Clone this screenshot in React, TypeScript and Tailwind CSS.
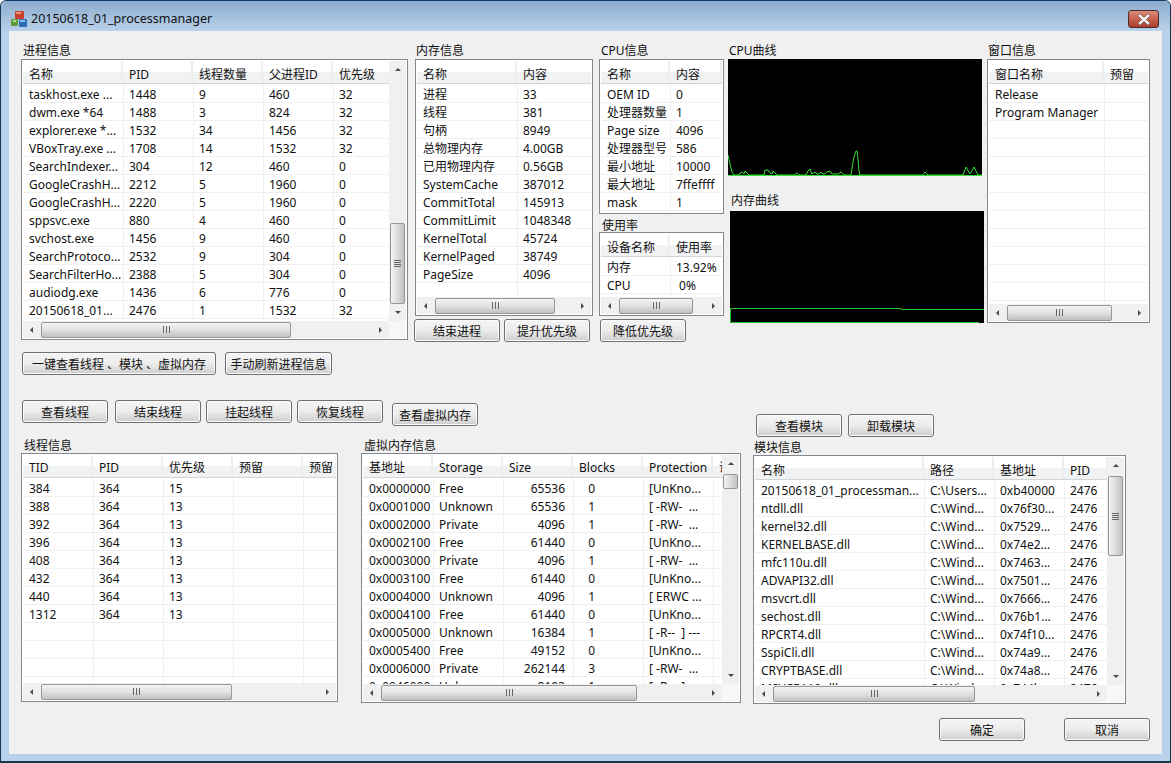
import React from 'react';

type Col = { w: number; right?: boolean };

type ListProps = {
  className: string;
  cols: Col[];
  head: string[];
  rows: string[][];
  hthumb?: number;
  vthumb?: [number, number];
  grip?: boolean;
  headPad?: string;
};

const cols = (...w: number[]): Col[] => w.map((n) => ({ w: n }));

function Arrow({ dir }: { dir: 'up' | 'down' | 'left' | 'right' }) {
  const pts = {
    up: '4,2 7,5 1,5',
    down: '1,2 7,2 4,5',
    left: '5,1 5,7 2,4',
    right: '2,1 2,7 5,4',
  }[dir];
  return (
    <svg width="8" height="8" viewBox="0 0 8 8" className="block">
      <polygon points={pts} fill="#4a4a4a" />
    </svg>
  );
}

function Grip({ vertical }: { vertical?: boolean }) {
  if (vertical) {
    return (
      <div className="flex flex-col gap-px">
        {[0, 1, 2, 3].map((i) => (
          <div key={i} className="h-px w-[7px] bg-[#666]" />
        ))}
      </div>
    );
  }
  return (
    <div className="flex gap-[2px]">
      {[0, 1, 2].map((i) => (
        <div key={i} className="w-px h-[7px] bg-[#666]" />
      ))}
    </div>
  );
}

function HScroll({ thumb }: { thumb: number }) {
  return (
    <div className="h-[17px] flex-1 min-w-0 flex items-center bg-[#f0f0f0]">
      <div className="w-[18px] shrink-0 flex justify-center"><Arrow dir="left" /></div>
      <div
        className="h-[16px] shrink-0 flex items-center justify-center rounded-[2px] border border-[#979797] bg-linear-to-b from-[#f3f3f3] via-[#e2e2e2] to-[#c0c0c0]"
        style={{ width: thumb }}
      >
        <Grip />
      </div>
      <div className="flex-1" />
      <div className="w-[17px] shrink-0 flex justify-center"><Arrow dir="right" /></div>
    </div>
  );
}

function VScroll({ top, height, grip }: { top: number; height: number; grip?: boolean }) {
  return (
    <div className="w-[17px] shrink-0 flex flex-col items-center bg-[#f0f0f0]">
      <div className="h-[17px] shrink-0 flex items-center"><Arrow dir="up" /></div>
      <div className="shrink-0" style={{ height: top - 17 }} />
      <div
        className="w-[15px] shrink-0 flex items-center justify-center rounded-[2px] border border-[#979797] bg-linear-to-r from-[#f3f3f3] via-[#dcdcdc] to-[#c0c0c0]"
        style={{ height }}
      >
        {grip && <Grip vertical />}
      </div>
      <div className="flex-1" />
      <div className="h-[17px] shrink-0 flex items-center"><Arrow dir="down" /></div>
    </div>
  );
}

function ListView({ className, cols, head, rows, hthumb, vthumb, grip, headPad = 'pt-[5px]' }: ListProps) {
  const filled = [...rows];
  while (filled.length < 16) filled.push([]);
  return (
    <div className={`${className} flex flex-col border border-[#828790] bg-white p-px overflow-hidden`}>
      <div className="flex flex-1 min-h-0">
        <div className="flex flex-col flex-1 min-w-0 overflow-hidden">
          <div className="flex h-[23px] shrink-0 mb-px border-b border-[#d5d5d5] bg-linear-to-b from-white from-50% to-[#f1f2f4] to-50%">
            {cols.map((c, i) => (
              <div
                key={i}
                className={`shrink-0 h-full pl-[6px] ${headPad} leading-[17px] border-r-2 border-[#eceef0] whitespace-nowrap overflow-hidden`}
                style={{ width: c.w }}
              >
                {head[i]}
              </div>
            ))}
          </div>
          <div className="flex-1 min-h-0 overflow-hidden">
            {filled.map((row, r) => (
              <div key={r} className="flex h-[18px] pl-px border-b border-[#f0f0f0]">
                {cols.map((c, i) => (
                  <div
                    key={i}
                    className={`shrink-0 h-full pl-[5px] leading-[19px] border-r border-[#f0f0f0] whitespace-pre overflow-hidden ${c.right ? 'text-right pr-[8px]' : ''}`}
                    style={{ width: c.w }}
                  >
                    {row[i] ?? ''}
                  </div>
                ))}
              </div>
            ))}
          </div>
        </div>
        {vthumb && <VScroll top={vthumb[0]} height={vthumb[1]} grip={grip} />}
      </div>
      {hthumb && (
        <div className="flex shrink-0">
          <HScroll thumb={hthumb} />
          {vthumb && <div className="w-[17px] shrink-0 bg-[#f7f7f7]" />}
        </div>
      )}
    </div>
  );
}

function Btn({ children, className = 'w-[86px]' }: { children: React.ReactNode; className?: string }) {
  return (
    <button className={`${className} h-[23px] shrink-0 pt-[2px] rounded-[3px] border border-[#707070] bg-linear-to-b from-[#f3f3f3] from-10% via-[#ececec] via-50% to-[#cdcdcd] text-center leading-[19px] whitespace-nowrap shadow-[inset_0_0_0_1px_#fbfbfb]`}>
      {children}
    </button>
  );
}

function Label({ children, className = 'leading-[16px]' }: { children: React.ReactNode; className?: string }) {
  return <div className={`h-4 whitespace-nowrap ${className}`}>{children}</div>;
}

const processRows = [
  ['taskhost.exe ...', '1448', '9', '460', '32'],
  ['dwm.exe *64', '1488', '3', '824', '32'],
  ['explorer.exe *...', '1532', '34', '1456', '32'],
  ['VBoxTray.exe ...', '1708', '14', '1532', '32'],
  ['SearchIndexer...', '304', '12', '460', '0'],
  ['GoogleCrashH...', '2212', '5', '1960', '0'],
  ['GoogleCrashH...', '2220', '5', '1960', '0'],
  ['sppsvc.exe', '880', '4', '460', '0'],
  ['svchost.exe', '1456', '9', '460', '0'],
  ['SearchProtoco...', '2532', '9', '304', '0'],
  ['SearchFilterHo...', '2388', '5', '304', '0'],
  ['audiodg.exe', '1436', '6', '776', '0'],
  ['20150618_01...', '2476', '1', '1532', '32'],
];

const memoryRows = [
  ['进程', '33'],
  ['线程', '381'],
  ['句柄', '8949'],
  ['总物理内存', '4.00GB'],
  ['已用物理内存', '0.56GB'],
  ['SystemCache', '387012'],
  ['CommitTotal', '145913'],
  ['CommitLimit', '1048348'],
  ['KernelTotal', '45724'],
  ['KernelPaged', '38749'],
  ['PageSize', '4096'],
];

const cpuRows = [
  ['OEM ID', '0'],
  ['处理器数量', '1'],
  ['Page size', '4096'],
  ['处理器型号', '586'],
  ['最小地址', '10000'],
  ['最大地址', '7ffeffff'],
  ['mask', '1'],
];

const threadRows = [
  ['384', '364', '15'],
  ['388', '364', '13'],
  ['392', '364', '13'],
  ['396', '364', '13'],
  ['408', '364', '13'],
  ['432', '364', '13'],
  ['440', '364', '13'],
  ['1312', '364', '13'],
];

const unknown = '[UnKno...';
const rw = '[ -RW-  ...';
const vmRows = [
  ['0x0000000', 'Free', '65536', '   0', unknown],
  ['0x0001000', 'Unknown', '65536', '   1', rw],
  ['0x0002000', 'Private', '4096', '   1', rw],
  ['0x0002100', 'Free', '61440', '   0', unknown],
  ['0x0003000', 'Private', '4096', '   1', rw],
  ['0x0003100', 'Free', '61440', '   0', unknown],
  ['0x0004000', 'Unknown', '4096', '   1', '[ ERWC ...'],
  ['0x0004100', 'Free', '61440', '   0', unknown],
  ['0x0005000', 'Unknown', '16384', '   1', '[ -R--  ] ---'],
  ['0x0005400', 'Free', '49152', '   0', unknown],
  ['0x0006000', 'Private', '262144', '   3', rw],
  ['0x0046000', 'Unknown', '8192', '   1', '[ -R--  ] ---'],
];

const wind = 'C:\\Wind...';
const moduleRows = [
  ['20150618_01_processman...', 'C:\\Users...', '0xb40000', '2476'],
  ['ntdll.dll', wind, '0x76f30...', '2476'],
  ['kernel32.dll', wind, '0x7529...', '2476'],
  ['KERNELBASE.dll', wind, '0x74e2...', '2476'],
  ['mfc110u.dll', wind, '0x7463...', '2476'],
  ['ADVAPI32.dll', wind, '0x7501...', '2476'],
  ['msvcrt.dll', wind, '0x7666...', '2476'],
  ['sechost.dll', wind, '0x76b1...', '2476'],
  ['RPCRT4.dll', wind, '0x74f10...', '2476'],
  ['SspiCli.dll', wind, '0x74a9...', '2476'],
  ['CRYPTBASE.dll', wind, '0x74a8...', '2476'],
  ['MSVCR110.dll', wind, '0x744b...', '2476'],
];

const cpuLine =
  '0,96 2,105 4,113 6,116 11,116 12,114 14,113 16,115 17,112 19,114 21,116 33,116 36,116 37,111 40,111 42,114 44,115 45,112 47,114 49,116 66,116 69,114 71,116 78,116 80,112 82,110 84,115 87,113 89,115 91,115 93,113 95,115 97,115 99,113 102,112 104,115 110,115 113,113 115,115 117,116 123,116 125,103 126,98 128,92 129,92 130,100 131,112 132,116 195,116 197,113 200,116 235,116 238,108 242,115 246,108 250,116 254,116';

function AppIcon() {
  return (
    <svg width="16" height="16" viewBox="0 0 16 16" className="shrink-0 -mt-px">
      <rect x="0" y="8" width="7" height="7" rx="1" fill="#5f9c3a" />
      <rect x="4" y="0" width="9" height="8" rx="1" fill="#c8402c" />
      <rect x="5" y="1" width="5" height="2" fill="#ef9a7e" />
      <rect x="8" y="8" width="8" height="8" rx="1" fill="#2a6db3" />
      <rect x="9" y="9" width="5" height="2" fill="#8fc1ea" />
      <rect x="2" y="9" width="3" height="2" fill="#b3d88d" />
    </svg>
  );
}

export default function App() {
  return (
    <div className="w-[1171px] h-[763px] overflow-hidden flex flex-col bg-[#b9d1ea] border border-b-2 border-[#12384f] border-t-[#0f3f68] rounded-t-[6px] text-[12px] text-[#111] font-['Noto_Sans','Noto_Sans_CJK_SC',sans-serif]">
      <div className="h-[30px] shrink-0 flex items-center pt-[6px] pl-[10px] pr-[11px] bg-linear-to-b from-[#8cacce] to-[#b9d1ea]">
        <AppIcon />
        <div className="ml-[4px] text-[12.5px] text-[#111] leading-none pt-px">20150618_01_processmanager</div>
        <div className="ml-auto w-[31px] h-[18px] flex items-center justify-center rounded-[3px] border border-[#4f2a2a] bg-linear-to-b from-[#d98a7e] via-[#c8604e] to-[#a93d2c]">
          <svg width="14" height="11" viewBox="0 0 14 11">
            <path d="M2 1 L12 10 M12 1 L2 10" stroke="#5a4a4a" strokeWidth="3.6" />
            <path d="M2 1 L12 10 M12 1 L2 10" stroke="#f4f4f4" strokeWidth="2.4" />
          </svg>
        </div>
      </div>

      <div className="mx-[8px] h-[723px] shrink-0 bg-[#f0f0f0] pt-3">
        <div className="flex items-start pl-3">
          <div className="w-[387px] shrink-0">
            <Label className="ml-[2px] leading-[16px]">进程信息</Label>
            <ListView
              className="h-[281px]"
              cols={cols(100, 70, 70, 70, 70)}
              head={['名称', 'PID', '线程数量', '父进程ID', '优先级']}
              rows={processRows}
              hthumb={250}
              vthumb={[162, 81]}
              grip
            />
          </div>

          <div className="w-[178px] shrink-0 ml-[7px]">
            <Label className="ml-px leading-[16px]">内存信息</Label>
            <ListView
              className="h-[257px]"
              cols={cols(100, 76)}
              head={['名称', '内容']}
              rows={memoryRows}
              hthumb={120}
            />
            <div className="flex gap-1 mt-[3px] -ml-px">
              <Btn>结束进程</Btn>
              <Btn>提升优先级</Btn>
            </div>
          </div>

          <div className="w-[125px] shrink-0 ml-[6px]">
            <Label className="ml-[2px] leading-[16px]">CPU信息</Label>
            <ListView
              className="h-[155px]"
              cols={cols(69, 52)}
              head={['名称', '内容']}
              rows={cpuRows}
            />
            <Label className="mt-[2px] ml-[3px] leading-[20px]">使用率</Label>
            <ListView
              className="h-[84px]"
              cols={cols(69, 54)}
              head={['设备名称', '使用率']}
              rows={[['内存', '13.92%'], ['CPU', ' 0%']]}
              hthumb={74}
            />
            <div className="mt-[3px] ml-px">
              <Btn>降低优先级</Btn>
            </div>
          </div>

          <div className="w-[256px] shrink-0 ml-1">
            <Label className="ml-px leading-[16px]">CPU曲线</Label>
            <svg width="254" height="117" viewBox="0 0 254 117" className="block bg-black">
              <polyline points={cpuLine} fill="none" stroke="#35e035" strokeWidth="1" />
              <line x1="0" y1="116.5" x2="254" y2="116.5" stroke="#35e035" strokeWidth="1" />
            </svg>
            <Label className="mt-4 ml-[3px] leading-[18px]">内存曲线</Label>
            <svg width="254" height="112" viewBox="0 0 254 112" className="block bg-black mt-[3px] ml-[2px]">
              <polyline points="249,111.5 0.5,111.5 0.5,97.5 171,97.5 171,98.5 254,98.5" fill="none" stroke="#26c426" strokeWidth="1" />
            </svg>
          </div>

          <div className="w-[163px] shrink-0 ml-[3px]">
            <Label className="ml-px leading-[16px]">窗口信息</Label>
            <ListView
              className="h-[264px]"
              cols={cols(115, 46)}
              head={['窗口名称', '预留']}
              rows={[['Release', ''], ['Program Manager', '']]}
              hthumb={105}
            />
          </div>
        </div>

        <div className="flex gap-[9px] mt-[10px] pl-[13px]">
          <Btn className="w-[194px]">一键查看线程 、模块 、虚拟内存</Btn>
          <Btn className="w-[107px]">手动刷新进程信息</Btn>
        </div>

        <div className="flex items-start mt-[25px] pl-3">
          <div className="w-[720px] shrink-0">
            <div className="flex items-start pl-px">
              <Btn>查看线程</Btn>
              <div className="ml-[7px]"><Btn>结束线程</Btn></div>
              <div className="ml-[5px]"><Btn>挂起线程</Btn></div>
              <div className="ml-[5px]"><Btn>恢复线程</Btn></div>
              <div className="ml-[9px] mt-[3px]"><Btn>查看虚拟内存</Btn></div>
            </div>
            <div className="flex items-start mt-[11px]">
              <div className="w-[317px] shrink-0">
                <Label className="ml-[3px] leading-[18px]">线程信息</Label>
                <ListView
                  className="h-[249px]"
                  cols={cols(70, 70, 70, 70, 34)}
                  head={['TID', 'PID', '优先级', '预留', '预留']}
                  rows={threadRows}
                  hthumb={191}
                  headPad="pt-[4px]"
                />
              </div>
              <div className="w-[380px] shrink-0 ml-[23px]">
                <Label className="ml-[3px] leading-[18px]">虚拟内存信息</Label>
                <ListView
                  className="h-[250px]"
                  cols={[{ w: 70 }, { w: 70 }, { w: 70, right: true }, { w: 70 }, { w: 70 }, { w: 40 }]}
                  head={['基地址', 'Storage', 'Size', 'Blocks', 'Protection', '说明']}
                  rows={vmRows}
                  hthumb={256}
                  vthumb={[19, 15]}
                  headPad="pt-[4px]"
                />
              </div>
            </div>
          </div>

          <div className="w-[373px] shrink-0 ml-3 pt-[14px]">
            <div className="flex gap-[6px] ml-[3px]">
              <Btn>查看模块</Btn>
              <Btn>卸载模块</Btn>
            </div>
            <Label className="mt-[2px] ml-px leading-[18px]">模块信息</Label>
            <ListView
              className="h-[249px]"
              cols={cols(169, 70, 70, 44)}
              head={['名称', '路径', '基地址', 'PID']}
              rows={moduleRows}
              hthumb={202}
              vthumb={[19, 80]}
              grip
            />
          </div>
        </div>

        <div className="flex justify-end gap-[39px] mt-[14px] pr-3">
          <Btn>确定</Btn>
          <Btn>取消</Btn>
        </div>
      </div>
    </div>
  );
}
